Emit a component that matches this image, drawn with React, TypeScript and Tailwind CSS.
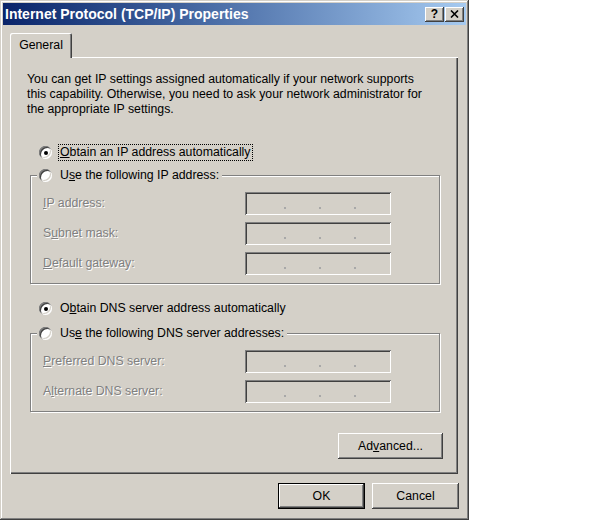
import React from 'react';

const raised =
  'shadow-[inset_-1px_-1px_0_#404040,inset_1px_1px_0_#ffffff,inset_-2px_-2px_0_#808080,inset_2px_2px_0_#d4d0c8]';
const sunken =
  'shadow-[inset_1px_1px_0_#808080,inset_-1px_-1px_0_#ffffff,inset_2px_2px_0_#404040,inset_-2px_-2px_0_#d4d0c8]';
const disabledText = 'text-[#808080] [text-shadow:1px_1px_0_#ffffff]';

const Radio: React.FC<{ checked?: boolean }> = ({ checked }) => (
  <span
    className={`flex h-[13px] w-[13px] shrink-0 items-center justify-center rounded-full bg-white ${sunken}`}
  >
    {checked && <span className="h-[4px] w-[4px] rounded-full bg-black" />}
  </span>
);

const IpField: React.FC = () => (
  <div className={`flex h-[23px] w-[146px] items-center justify-center gap-[33px] pt-[8px] pl-[3px] ${sunken}`}>
    <span className="h-[2px] w-[2px] bg-[#a8a8a8]" />
    <span className="h-[2px] w-[2px] bg-[#a8a8a8]" />
    <span className="h-[2px] w-[2px] bg-[#a8a8a8]" />
  </div>
);

interface FieldRowProps {
  before: string;
  hot: string;
  after: string;
}

const FieldRow: React.FC<FieldRowProps> = ({ before, hot, after }) => (
  <div className="flex h-[23px] items-center">
    <span className={`w-[202px] ${disabledText}`}>
      {before}
      <u>{hot}</u>
      {after}
    </span>
    <IpField />
  </div>
);

const GroupBox: React.FC<{ legend: React.ReactNode; rows: FieldRowProps[] }> = ({ legend, rows }) => (
  <div className="relative ml-[3px] w-[410px] border border-[#808080] pt-[16px] pb-[8px] pl-[12px] shadow-[inset_1px_1px_0_#ffffff,1px_1px_0_#ffffff]">
    <div className="absolute -top-[9px] left-[6px] flex h-[17px] items-center gap-[8px] bg-[#d4d0c8] px-[2px]">
      <Radio />
      <span className="pr-[1px]">{legend}</span>
    </div>
    <div className="flex flex-col gap-[7px]">
      {rows.map((r, i) => (
        <FieldRow key={i} {...r} />
      ))}
    </div>
  </div>
);

const Button: React.FC<{ children: React.ReactNode; w: string; isDefault?: boolean }> = ({ children, w, isDefault }) => (
  <div
    className={`flex h-[26px] items-center justify-center bg-[#d4d0c8] ${w} ${
      isDefault
        ? 'shadow-[inset_0_0_0_1px_#000000,inset_-2px_-2px_0_#404040,inset_2px_2px_0_#ffffff,inset_-3px_-3px_0_#808080]'
        : raised
    }`}
  >
    {children}
  </div>
);

const App: React.FC = () => {
  return (
    <div className="h-[521px] w-[595px] bg-white font-['Liberation_Sans',Arial,sans-serif] text-[12.3px] leading-[15px] text-black">
      <div className="h-[520px] w-[469px] bg-[#d4d0c8] p-[3px] shadow-[inset_-1px_-1px_0_#404040,inset_1px_1px_0_#d4d0c8,inset_-2px_-2px_0_#808080,inset_2px_2px_0_#ffffff]">
        {/* title bar */}
        <div className="flex h-[22px] items-center justify-between bg-gradient-to-r from-[#0a246a] to-[#a6caf0] pr-[2px] pl-[2px]">
          <span className="text-[14px] font-bold text-white">Internet Protocol (TCP/IP) Properties</span>
          <div className="flex gap-[1px]">
            <div className={`flex h-[15px] w-[19px] items-center justify-center bg-[#d4d0c8] text-[12px] font-bold leading-none ${raised}`}>
              ?
            </div>
            <div className={`flex h-[15px] w-[19px] items-center justify-center bg-[#d4d0c8] ${raised}`}>
              <svg width="9" height="8" viewBox="0 0 9 8">
                <path d="M1 0.5 L8 7.5 M8 0.5 L1 7.5" stroke="#000" strokeWidth="1.6" />
              </svg>
            </div>
          </div>
        </div>

        <div className="px-[7px] pt-[8px]">
          {/* tab */}
          <div className="relative z-10 -mb-px flex h-[25px] w-[62px] items-center justify-center rounded-t-[2px] bg-[#d4d0c8] pb-[1px] shadow-[inset_1px_1px_0_#ffffff,inset_-1px_0_0_#404040,inset_-2px_0_0_#808080]">
            General
          </div>

          {/* panel */}
          <div className="flex h-[417px] w-[448px] flex-col pt-[15px] pl-[17px] shadow-[inset_1px_1px_0_#ffffff,inset_-1px_-1px_0_#404040,inset_-2px_-2px_0_#808080]">
            <p className="whitespace-nowrap">
              You can get IP settings assigned automatically if your network supports
              <br />
              this capability. Otherwise, you need to ask your network administrator for
              <br />
              the appropriate IP settings.
            </p>

            <div className="mt-[27px] ml-[12px] flex h-[17px] items-center gap-[6px]">
              <Radio checked />
              <span className="border border-dotted border-black px-[1px] leading-[15px]">
                <u>O</u>btain an IP address automatically
              </span>
            </div>

            <div className="mt-[14px]">
              <GroupBox
                legend={
                  <>
                    U<u>s</u>e the following IP address:
                  </>
                }
                rows={[
                  { before: '', hot: 'I', after: 'P address:' },
                  { before: 'S', hot: 'u', after: 'bnet mask:' },
                  { before: '', hot: 'D', after: 'efault gateway:' },
                ]}
              />
            </div>

            <div className="mt-[16px] ml-[12px] flex h-[17px] items-center gap-[8px]">
              <Radio checked />
              <span>
                O<u>b</u>tain DNS server address automatically
              </span>
            </div>

            <div className="mt-[16px]">
              <GroupBox
                legend={
                  <>
                    Us<u>e</u> the following DNS server addresses:
                  </>
                }
                rows={[
                  { before: '', hot: 'P', after: 'referred DNS server:' },
                  { before: 'A', hot: 'l', after: 'ternate DNS server:' },
                ]}
              />
            </div>

            <div className="mt-[21px] flex w-[416px] justify-end">
              <Button w="w-[105px]">
                <span>
                  Ad<u>v</u>anced...
                </span>
              </Button>
            </div>
          </div>

          {/* dialog buttons */}
          <div className="mt-[9px] flex justify-end gap-[7px]">
            <Button w="w-[87px]" isDefault>
              OK
            </Button>
            <Button w="w-[87px]">Cancel</Button>
          </div>
        </div>
      </div>
    </div>
  );
};

export default App;
